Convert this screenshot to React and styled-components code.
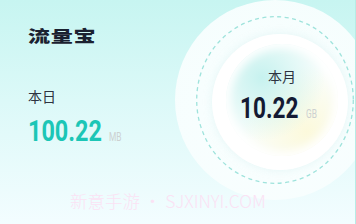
import React from 'react'
import styled, { createGlobalStyle } from 'styled-components'

const Global = createGlobalStyle`
  html, body {
    margin: 0;
    padding: 0;
    background: #fff;
  }
  body {
    font-family: "Noto Sans CJK SC", "Noto Sans", sans-serif;
  }
`;

const Card = styled.div`
  position: relative;
  width: 356px;
  height: 224px;
  overflow: hidden;
  display: flex;
  box-sizing: border-box;
  border-right: 1px solid #b6ece6;
  background: linear-gradient(180deg, #c7f5f1 0%, #dcf9f8 45%, #f3fdff 100%);
`;

const LeftCol = styled.div`
  flex: 0 0 175px;
  box-sizing: border-box;
  padding: 27px 0 0 28px;
  display: flex;
  flex-direction: column;
  align-items: flex-start;
`;

const Title = styled.div`
  font-family: "Noto Sans CJK SC", sans-serif;
  font-weight: 900;
  font-size: 16px;
  line-height: 16px;
  letter-spacing: 0.5px;
  color: #1b2130;
  transform: scaleX(1.38);
  transform-origin: left center;
`;

const Label = styled.div`
  font-family: "Noto Sans CJK SC", sans-serif;
  font-size: 14px;
  line-height: 14px;
  color: #2e3340;
  margin-top: ${p => p.$top || 0}px;
`;

const Amount = styled.div`
  display: flex;
  align-items: baseline;
  margin-top: ${p => p.$top || 0}px;
  white-space: nowrap;
`;

const Num = styled.span`
  display: inline-block;
  font-family: Roboto, "Liberation Sans", sans-serif;
  font-weight: 700;
  font-size: ${p => p.$size}px;
  line-height: ${p => p.$size}px;
  color: ${p => p.$color};
  transform: scaleX(0.78);
  transform-origin: left bottom;
  margin-right: ${p => p.$trim}px;
`;

const Unit = styled.span`
  display: inline-block;
  font-family: Roboto, "Liberation Sans", sans-serif;
  font-size: 13.5px;
  color: #cdd1d1;
  transform: scaleX(0.62);
  transform-origin: left bottom;
`;

const Glow = styled.div`
  flex: 0 0 200px;
  width: 200px;
  height: 200px;
  border-radius: 50%;
  display: flex;
  align-items: center;
  justify-content: center;
  background: radial-gradient(circle, rgba(250,255,255,0.97) 0%, rgba(248,254,254,0.95) 72%, rgba(255,255,255,0.6) 88%, rgba(255,255,255,0) 100%);
`;

const Dashed = styled.div`
  position: relative;
  width: 158px;
  height: 168px;
  display: flex;
  align-items: center;
  justify-content: center;
`;

const DashLine = styled.svg`
  position: absolute;
  left: 0;
  top: 0;
  width: 158px;
  height: 168px;
  overflow: visible;
`;

const WhiteRing = styled.div`
  width: 136px;
  height: 136px;
  border-radius: 50%;
  margin: 4px 0 0 10px;
  background: #ffffff;
  box-shadow: 0 0 8px rgba(220, 242, 242, 0.7);
  display: flex;
  align-items: center;
  justify-content: center;
`;

const Disc = styled.div`
  width: 112px;
  height: 112px;
  box-sizing: border-box;
  border-radius: 50%;
  margin: 0 0 4px 4px;
  padding-top: 25px;
  display: flex;
  flex-direction: column;
  align-items: center;
  background:
    radial-gradient(circle at 32% 30%, rgba(196, 241, 238, 0.95) 0%, rgba(196, 241, 238, 0) 58%),
    radial-gradient(circle at 72% 78%, rgba(252, 249, 218, 0.95) 0%, rgba(252, 249, 218, 0) 55%),
    #fafefd;
  box-shadow: inset 0 0 10px 4px #ffffff;
`;

const Watermark = styled.div`
  position: absolute;
  left: 70px;
  top: 190px;
  font-family: "Noto Sans CJK SC", "Noto Sans", sans-serif;
  font-weight: 300;
  font-size: 17.5px;
  line-height: 22px;
  color: #fbe2f4;
  white-space: nowrap;
`;

export default function App() {
  return (
    <>
      <Global />
      <Card>
        <LeftCol>
          <Title>流量宝</Title>
          <Label $top={46}>本日</Label>
          <Amount $top={13}>
            <Num $size={30} $color="#1cc6b6" $trim={-14}>100.22</Num>
            <Unit>MB</Unit>
          </Amount>
        </LeftCol>
        <Glow>
          <Dashed>
            <DashLine viewBox="0 0 158 168">
              <ellipse cx="79" cy="84" rx="78.3" ry="83.3" fill="none" stroke="#9fe3dc" strokeWidth="1.3" strokeDasharray="4 3.5" />
            </DashLine>
            <WhiteRing>
              <Disc>
                <Label>本月</Label>
                <Amount $top={11}>
                  <Num $size={29} $color="#141a33" $trim={-9}>10.22</Num>
                  <Unit>GB</Unit>
                </Amount>
              </Disc>
            </WhiteRing>
          </Dashed>
        </Glow>
        <Watermark>新意手游 • SJXINYI.COM</Watermark>
      </Card>
    </>
  );
}
